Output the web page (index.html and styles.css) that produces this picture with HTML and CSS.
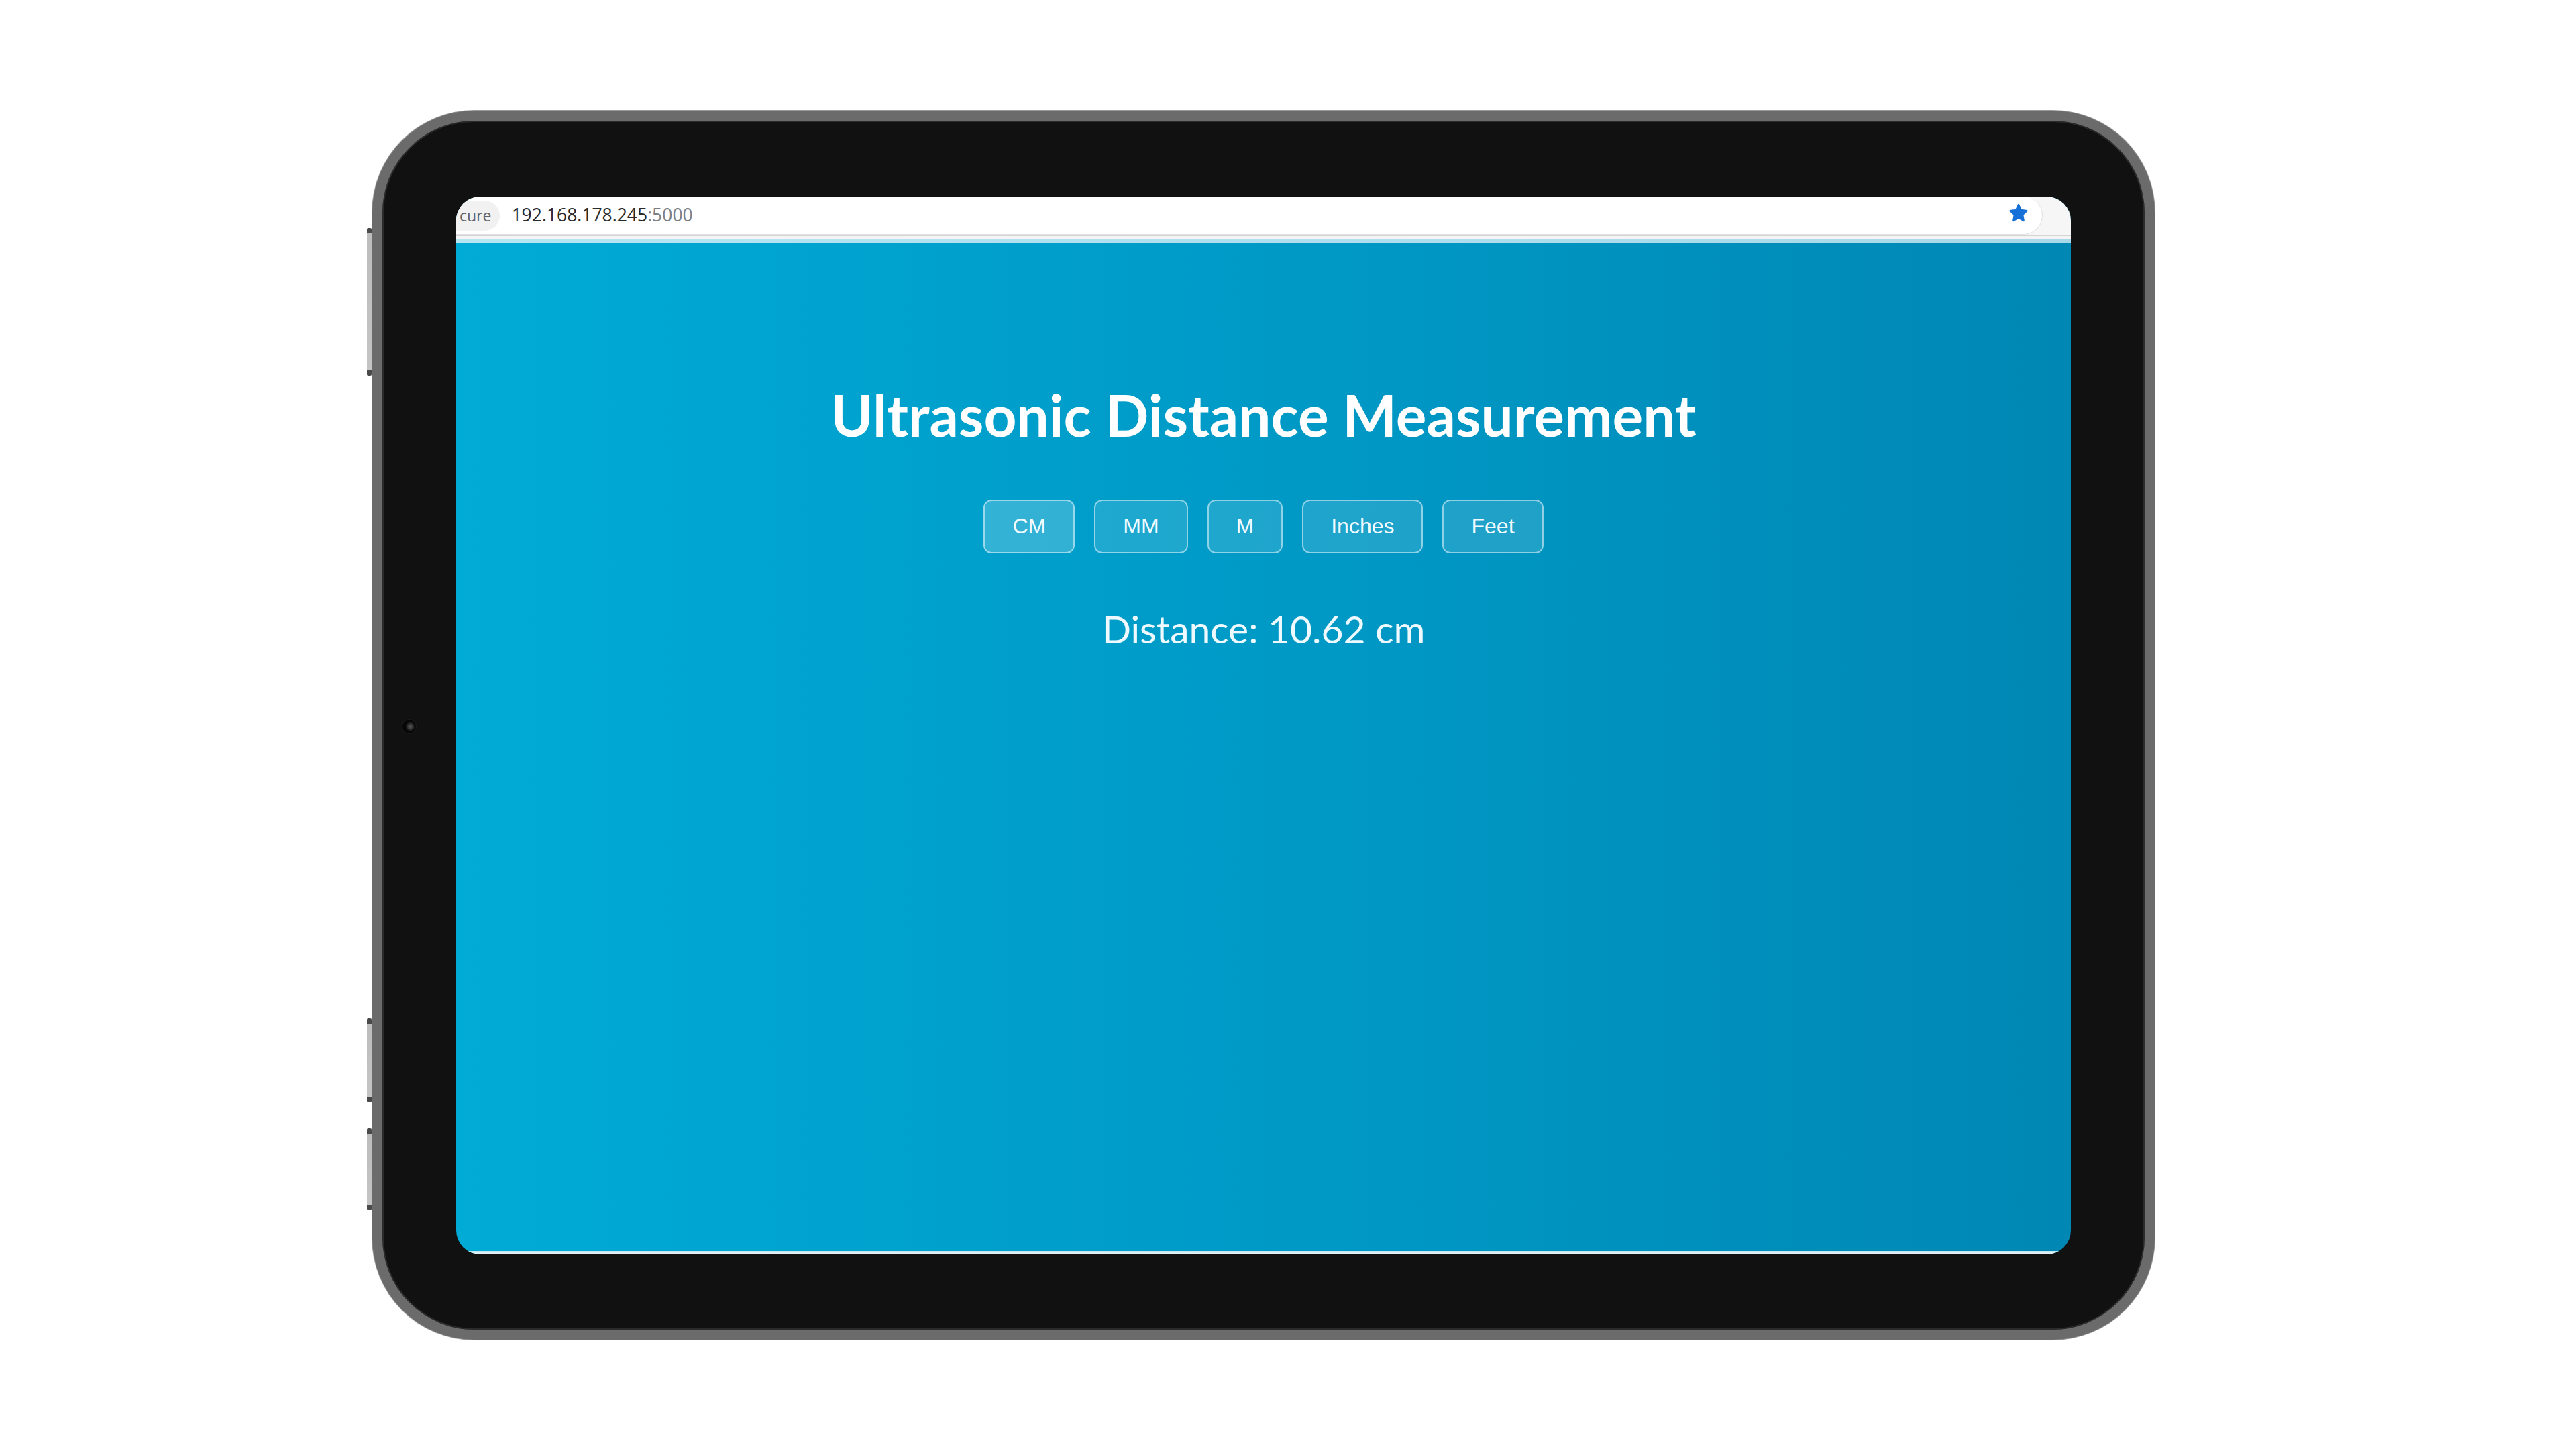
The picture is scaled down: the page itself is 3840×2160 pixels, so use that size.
FILE: index.html
```html
<!DOCTYPE html>
<html lang="en">
<head>
<meta charset="utf-8">
<title>Ultrasonic Distance Measurement</title>
<link rel="stylesheet" href="styles.css">
</head>
<body>
<div class="stage">
  <div class="tablet">
    <span class="side-btn side-btn-top"></span>
    <span class="side-btn side-btn-vol1"></span>
    <span class="side-btn side-btn-vol2"></span>
    <span class="camera"></span>
    <div class="screen">
      <div class="toolbar">
        <div class="omnibox">
          <span class="chip">cure</span>
          <span class="url">192.168.178.245<span class="port">:5000</span></span>
          <span class="spacer"></span>
          <svg class="star" viewBox="0 0 24 24" aria-hidden="true">
            <path d="M12 3.4l2.5 5.3 5.8.8-4.2 4 1 5.8L12 16.5l-5.1 2.8 1-5.8-4.2-4 5.8-.8z"/>
          </svg>
        </div>
      </div>
      <div class="toolbar-line"></div>
      <div class="toolbar-gap"></div>
      <div class="toolbar-tint"></div>
      <main class="page">
        <h1 class="title">Ultrasonic Distance Measurement</h1>
        <div class="units">
          <button class="unit unit-active">CM</button>
          <button class="unit">MM</button>
          <button class="unit">M</button>
          <button class="unit">Inches</button>
          <button class="unit">Feet</button>
        </div>
        <p class="distance">Distance: 10.62 cm</p>
      </main>
      <div class="screen-edge"></div>
    </div>
  </div>
</div>
</body>
</html>
```

FILE: styles.css
```css
html, body {
  margin: 0;
  padding: 0;
  background: #ffffff;
}

body {
  width: 3840px;
  height: 2160px;
  overflow: hidden;
}

.stage {
  padding: 165px 0 0 555px;
}

.tablet {
  position: relative;
  box-sizing: border-box;
  width: 2657px;
  height: 1832px;
  padding: 113px 110px 112px 110px;
  background: #111111;
  border: 15px solid #6b6b6b;
  border-radius: 152px;
  box-shadow: 0 0 0 1px #9a9a9a, inset 0 0 0 2px #2b2b2b;
}

.side-btn {
  position: absolute;
  left: -23px;
  width: 7px;
  border-radius: 2px;
  background: linear-gradient(to bottom, #4a4a4a 0, #4a4a4a 8px, #bdbdbd 8px, #c4c4c4 calc(100% - 8px), #4a4a4a calc(100% - 8px));
}

.side-btn-top { top: 160px; height: 220px; }
.side-btn-vol1 { top: 1338px; height: 125px; }
.side-btn-vol2 { top: 1502px; height: 122px; }

.camera {
  position: absolute;
  left: 30px;
  top: 893px;
  width: 20px;
  height: 20px;
  border-radius: 50%;
  background: radial-gradient(circle at 58% 50%, #575757 0, #3a3a3a 22%, #080808 45%, #020202 100%);
  box-shadow: 0 0 0 1px #1c1c1c;
}

.screen {
  display: flex;
  flex-direction: column;
  width: 2407px;
  height: 1577px;
  border-radius: 36px;
  overflow: hidden;
  background: linear-gradient(90deg, #00abd6 0%, #0098c5 55%, #0087b4 100%);
}

.toolbar {
  display: flex;
  height: 57px;
  flex: none;
  background: #f6f6f6;
}

.omnibox {
  display: flex;
  align-items: center;
  flex: 1;
  margin-right: 42px;
  background: #ffffff;
  border: 1.5px solid #e1e1e1;
  border-top: none;
  border-left: none;
  border-radius: 0 29px 29px 0;
  font-family: "Open Sans", "Noto Sans", sans-serif;
}

.chip {
  display: flex;
  align-items: center;
  height: 45px;
  padding: 0 13px 0 5px;
  background: #f1f1f1;
  border-radius: 0 23px 23px 0;
  color: #5f6368;
  font-size: 23px;
}

.url {
  margin-left: 17px;
  color: #2a2a2a;
  font-size: 26.5px;
  margin-top: -3px;
}

.port {
  color: #7b7f84;
}

.spacer {
  flex: 1;
}

.star {
  width: 36px;
  height: 36px;
  margin-right: 17px;
  margin-top: -6px;
}

.star path {
  fill: #1670d8;
  stroke: #1670d8;
  stroke-width: 1.6;
  stroke-linejoin: round;
}

.toolbar-line {
  flex: none;
  height: 2px;
  background: #d4d4d4;
}

.toolbar-gap {
  flex: none;
  height: 5px;
  background: #f4f4f4;
}

.toolbar-tint {
  flex: none;
  height: 5px;
  background: linear-gradient(90deg, #b6e6f4, #a9d9e8);
}

.page {
  display: flex;
  flex-direction: column;
  align-items: center;
  flex: 1;
  padding-top: 214px;
  color: #ffffff;
}

.title {
  margin: 0;
  font-family: Lato, "Open Sans", sans-serif;
  font-weight: 700;
  font-size: 85.5px;
  line-height: 1;
  color: #ffffff;
}

.units {
  display: flex;
  gap: 29px;
  margin-top: 83px;
}

.unit {
  box-sizing: border-box;
  height: 80px;
  padding: 0 41px;
  border: 2px solid rgba(255, 255, 255, 0.5);
  border-radius: 12px;
  background: rgba(255, 255, 255, 0.12);
  color: #f2fbff;
  font-family: "Liberation Sans", Arial, sans-serif;
  font-size: 32px;
}

.unit-active {
  background: rgba(255, 255, 255, 0.2);
}

.distance {
  margin: 84px 0 0;
  font-family: Lato, "Open Sans", sans-serif;
  font-size: 57px;
  line-height: 1;
  color: #eefaff;
}

.screen-edge {
  flex: none;
  height: 5px;
  background: linear-gradient(to bottom, #bfe7f2, #f4f4f4);
}
```
